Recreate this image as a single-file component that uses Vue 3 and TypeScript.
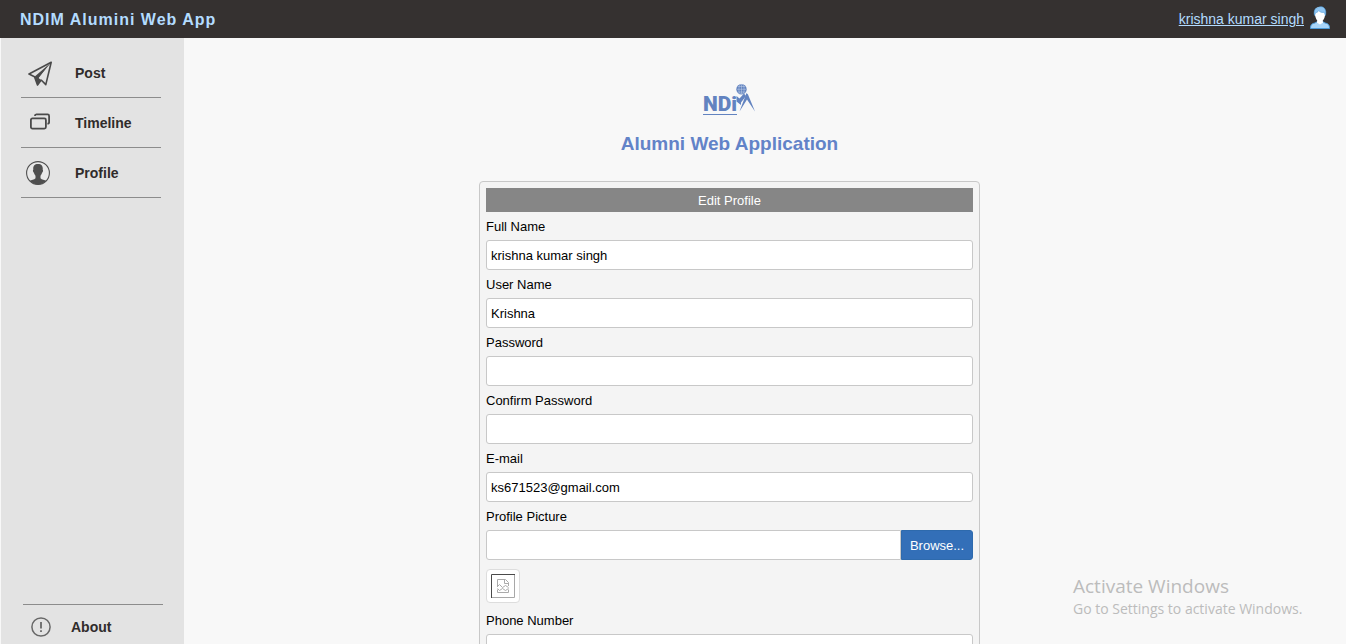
<script setup lang="ts">
import { ref } from 'vue'

interface Field {
  id: string
  label: string
  type: string
  value: string
}

const fields = ref<Field[]>([
  { id: 'full-name', label: 'Full Name', type: 'text', value: 'krishna kumar singh' },
  { id: 'user-name', label: 'User Name', type: 'text', value: 'Krishna' },
  { id: 'password', label: 'Password', type: 'password', value: '' },
  { id: 'confirm-password', label: 'Confirm Password', type: 'password', value: '' },
  { id: 'email', label: 'E-mail', type: 'email', value: 'ks671523@gmail.com' },
])
const picture = ref('')
const phone = ref('')
</script>

<template>
  <div class="app">
    <header class="topbar">
      <h1 class="brand">NDIM Alumini Web App</h1>
      <div class="account">
        <a href="#">krishna kumar singh</a>
        <svg class="avatar" viewBox="0 0 20 24" aria-hidden="true">
          <path d="M0.5 22.5C0.5 18.5 2 17.6 5 17L7.5 15.5H12.5L15 17C18 17.6 19.5 18.5 19.5 22.5Z" fill="#a9d5f8" stroke="#4d9bd8" />
          <path d="M6.8 16.4L10 18.5L13.2 16.4L12.4 14H7.6Z" fill="#fff" />
          <path d="M4.7 6C4.7 2.5 6.8 1 10 1S15.3 3 15.3 6.5C15.3 11.5 13 16 10 16S4.7 11 4.7 6Z" fill="#fff" />
          <path d="M4.5 9.5C3.4 4.5 5.3 1.8 8 1.8C9.2 0.2 13.3 0.3 14.6 2.6C16 4.2 16 7 15.4 9.5L14.2 6.2C11.5 7 9.5 5.6 8.7 4.6C8 6 6.5 6.6 5.5 6.8Z" fill="#8fc5f2" stroke="#4d9bd8" stroke-width="0.6" />
        </svg>
      </div>
    </header>

    <div class="body">
      <aside class="sidebar">
        <nav class="menu">
          <a class="item" href="#">
            <svg viewBox="0 0 26 26" aria-hidden="true">
              <path d="M25.2 2.2L3 14L8.5 16.8L11.5 25L15.2 20L19.8 24.6L25.2 2.2Z" fill="none" stroke="#4a4a4a" stroke-width="1.6" stroke-linejoin="round" />
              <path d="M25 2.5L8.5 16.8L11.5 25.5L15.2 19.8L12.8 18Z" fill="#4a4a4a" />
              <path d="M22.5 6L12.8 18L15.2 19.8Z" fill="#e3e3e3" />
            </svg>
            <span>Post</span>
          </a>
          <a class="item" href="#">
            <svg viewBox="0 0 26 26" fill="none" stroke="#4a4a4a" stroke-width="1.8" aria-hidden="true">
              <rect x="4.9" y="8.4" width="15" height="10.2" rx="1.5" />
              <path d="M8.9 6Q8.9 4.4 10.4 4.4H21.6Q23.1 4.4 23.1 5.9V12.2Q23.1 13.7 21.4 13.7" />
            </svg>
            <span>Timeline</span>
          </a>
          <a class="item" href="#">
            <svg viewBox="0 0 26 26" aria-hidden="true">
              <circle cx="12" cy="13" r="11.4" fill="#e8e8e8" stroke="#4f4f4f" stroke-width="1.1" />
              <path d="M12 4C15.9 4 17.1 6.5 16.7 9.7C17.4 10 17 12.1 16.2 12.5C15.8 14 14.9 15.1 14.5 15.7V18.3C15.8 19.8 18.6 19.9 20.4 20.8A11.4 11.4 0 0 1 3.6 20.8C5.4 19.9 8.2 19.8 9.5 18.3V15.7C9.1 15.1 8.2 14 7.8 12.5C7 12.1 6.6 10 7.3 9.7C6.9 6.5 8.1 4 12 4Z" fill="#4f4f4f" />
            </svg>
            <span>Profile</span>
          </a>
        </nav>
        <a class="about" href="#">
          <svg viewBox="0 0 20 20" fill="none" stroke="#686868" aria-hidden="true">
            <circle cx="10" cy="10" r="9.1" stroke-width="1.5" />
            <path d="M10 5V11.6M10 13.2V15" stroke-width="1.8" />
          </svg>
          <span>About</span>
        </a>
      </aside>

      <main class="content">
        <div class="identity">
          <svg class="logo" viewBox="0 0 52 32" role="img" aria-label="NDIM">
            <text x="0" y="27" class="logo-text">NDi</text>
            <path d="M0 30.5H34" stroke="#6283c0" />
            <path d="M33.5 12L36.5 14.5L41 9.5L43 12L38 18.5V21L33.5 17.5Z" fill="#6283c0" />
            <path d="M43.5 9L45 10.5L52 27.5L44 15.5L36.5 27.5Z" fill="#6283c0" />
            <circle cx="38.5" cy="5.3" r="5.2" fill="#6283c0" />
            <path d="M33.5 5.3H43.5M38.5 0.3V10.3M34.7 2.5H42.3M34.7 8H42.3" stroke="#c3d0e8" stroke-width="0.5" />
            <ellipse cx="38.5" cy="5.3" rx="2.6" ry="5" fill="none" stroke="#c3d0e8" stroke-width="0.5" />
          </svg>
          <h2>Alumni Web Application</h2>
        </div>

        <form class="card" @submit.prevent>
          <h3>Edit Profile</h3>
          <template v-for="field in fields" :key="field.id">
            <label :for="field.id">{{ field.label }}</label>
            <input :id="field.id" v-model="field.value" :type="field.type" />
          </template>
          <label for="picture">Profile Picture</label>
          <div class="upload">
            <input id="picture" v-model="picture" type="text" />
            <button type="button">Browse...</button>
          </div>
          <div class="thumb">
            <svg viewBox="0 0 24 24" fill="none" aria-hidden="true">
              <path d="M0.5 24V0.5H24" stroke="#4a4a4a" />
              <path d="M23.5 1V23.5H1" stroke="#a8a8a8" />
              <path d="M6.5 13V5.5H14.5L17.5 8.5V12M13.5 5.5V9.5H17.5M6.5 12.5L8.5 10.5L11.5 13.5L14.5 11.5L17.5 13.5M6.5 14.5L8.5 16.5L11.5 14.5L14.5 16.5L17.5 14.5M6.5 15.5V18.5H17.5V15.5" stroke="#aaa" />
            </svg>
          </div>
          <label for="phone">Phone Number</label>
          <input id="phone" v-model="phone" type="tel" />
        </form>
      </main>
    </div>

    <div class="watermark">
      <p class="watermark-title">Activate Windows</p>
      <p>Go to Settings to activate Windows.</p>
    </div>
  </div>
</template>

<style>
body {
  margin: 0;
}
</style>

<style scoped>
.app {
  display: flex;
  flex-direction: column;
  height: 100vh;
  overflow: hidden;
  position: relative;
  background: #f8f8f8;
  color: #000;
  font: 13px "Liberation Sans", Arial, sans-serif;
}
.app * {
  box-sizing: border-box;
}
h1, h2, h3, p {
  margin: 0;
}
svg {
  display: block;
  flex: none;
}
.topbar {
  flex: none;
  display: flex;
  align-items: center;
  justify-content: space-between;
  height: 38px;
  padding: 0 16px 0 20px;
  background: #353130;
}
.brand {
  padding-top: 2px;
  color: #b3dcff;
  font-size: 16px;
  letter-spacing: 1px;
}
.account {
  display: flex;
  align-items: center;
  gap: 6px;
}
.account a {
  color: #b3dcff;
  font-size: 14px;
}
.avatar {
  width: 20px;
  height: 24px;
  margin-bottom: 2px;
}
.body {
  flex: 1;
  display: flex;
  min-height: 0;
}
.sidebar {
  flex: none;
  display: flex;
  flex-direction: column;
  justify-content: space-between;
  width: 184px;
  padding: 10px 21px 0 20px;
  border-left: 1px solid #f8f8f8;
  background: #e3e3e3;
}
.sidebar a {
  display: flex;
  align-items: center;
  color: #302c2b;
  font-size: 14px;
  font-weight: bold;
  text-decoration: none;
}
.item {
  width: 140px;
  height: 50px;
  gap: 23px;
  padding: 0 0 0 5px;
  border-bottom: 1px solid #8c8c8c;
}
.item svg {
  width: 26px;
  height: 26px;
}
.about {
  width: 140px;
  height: 40px;
  margin-left: 2px;
  gap: 20px;
  padding: 4px 0 0 8px;
  border-top: 1px solid #8c8c8c;
}
.about svg {
  width: 20px;
  height: 20px;
}
.content {
  flex: 1;
  display: flex;
  flex-direction: column;
  align-items: center;
  padding: 46px 71px 0 0;
  overflow: hidden;
}
.identity {
  display: flex;
  flex-direction: column;
  align-items: center;
  gap: 16px;
  margin-bottom: 25px;
}
.logo {
  width: 52px;
  height: 32px;
  overflow: visible;
}
.logo-text {
  font: 900 21px Roboto, sans-serif;
  fill: #6283c0;
}
.identity h2 {
  color: #6283c8;
  font-size: 19px;
  line-height: 24px;
}
.card {
  flex: none;
  display: flex;
  flex-direction: column;
  width: 501px;
  max-width: 100%;
  padding: 6px;
  border: 1px solid #c8c8c8;
  border-radius: 4px;
  background: #f4f4f4;
}
.card h3 {
  padding-top: 2px;
  background: #868686;
  color: #fff;
  font-size: 13px;
  font-weight: normal;
  line-height: 22px;
  text-align: center;
}
label {
  padding-top: 2px;
  line-height: 26px;
}
input {
  width: 100%;
  height: 30px;
  padding: 0 4px;
  border: 1px solid #c8c8c8;
  border-radius: 3px;
  background: #fff;
  color: #000;
  font: inherit;
}
.upload {
  display: flex;
}
.upload input {
  flex: 1;
  min-width: 0;
  border-radius: 3px 0 0 3px;
}
.upload button {
  width: 72px;
  height: 30px;
  padding: 0;
  border: 1px solid #2e6aad;
  border-radius: 0 3px 3px 0;
  background: #336fb8;
  color: #fff;
  font: inherit;
}
.thumb {
  align-self: flex-start;
  margin: 9px 0 3px;
  padding: 4px;
  border: 1px solid #ddd;
  border-radius: 4px;
  background: #fff;
}
.thumb svg {
  width: 24px;
  height: 24px;
}
.watermark {
  position: absolute;
  right: 37px;
  bottom: 25px;
  width: 236px;
  color: #bcbcbc;
  font: 14px/20px "Open Sans", sans-serif;
  white-space: nowrap;
}
.watermark-title {
  font-size: 19px;
  line-height: 26px;
}
</style>
